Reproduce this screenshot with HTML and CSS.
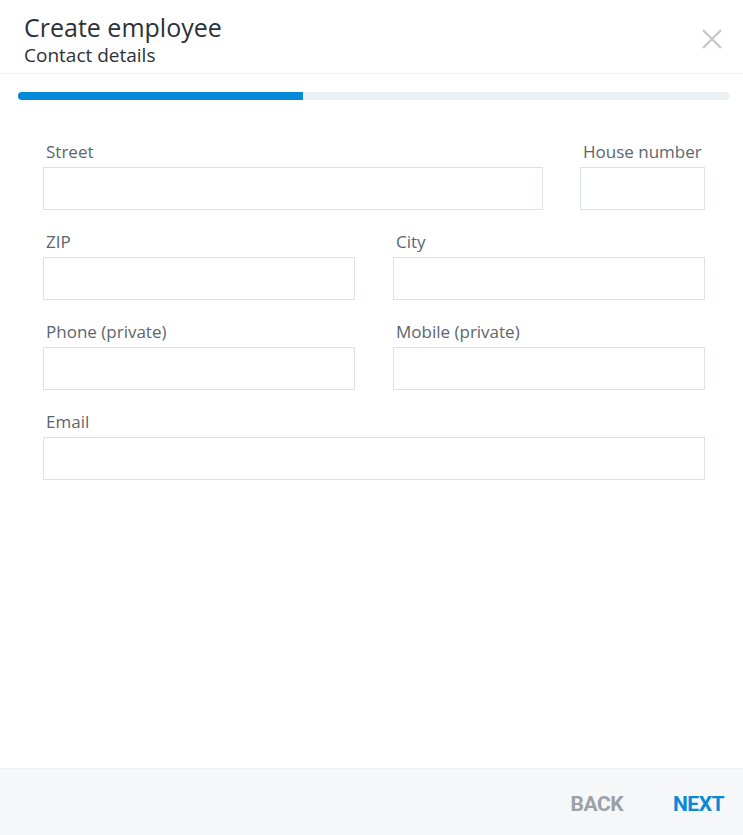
FILE: index.html
```html
<!DOCTYPE html>
<html lang="en">
<head>
  <meta charset="UTF-8">
  <meta name="viewport" content="width=device-width, initial-scale=1.0">
  <title>Create employee</title>
  <link rel="stylesheet" href="styles.css">
</head>
<body>
  <div class="dialog">
    <!-- Заголовок -->
    <div class="dialog-header">
      <div>
        <h1 class="dialog-title">Create employee</h1>
        <div class="dialog-subtitle">Contact details</div>
      </div>
      <button class="close-button" aria-label="Close">
        <svg width="22" height="20" viewBox="0 0 22 20">
          <path d="M2 1 L20 19 M20 1 L2 19" stroke="#c9c9c9" stroke-width="2.4" fill="none"/>
        </svg>
      </button>
    </div>

    <div class="progress">
      <div class="progress-fill" style="width: 40%;"></div>
    </div>

    <!-- Форма -->
    <form class="contact-form">
      <div class="row row-street">
        <div class="field">
          <label for="street">Street</label>
          <input type="text" id="street">
        </div>
        <div class="field">
          <label for="house">House number</label>
          <input type="text" id="house">
        </div>
      </div>
      <div class="row">
        <div class="field">
          <label for="zip">ZIP</label>
          <input type="text" id="zip">
        </div>
        <div class="field">
          <label for="city">City</label>
          <input type="text" id="city">
        </div>
      </div>
      <div class="row">
        <div class="field">
          <label for="phone">Phone (private)</label>
          <input type="text" id="phone">
        </div>
        <div class="field">
          <label for="mobile">Mobile (private)</label>
          <input type="text" id="mobile">
        </div>
      </div>
      <div class="row row-single">
        <div class="field">
          <label for="email">Email</label>
          <input type="text" id="email">
        </div>
      </div>
    </form>

    <div class="dialog-footer">
      <button class="footer-button back-button">BACK</button>
      <button class="footer-button next-button">NEXT</button>
    </div>
  </div>
</body>
</html>
```

FILE: styles.css
```css
body {
  font-family: "Open Sans", Lato, sans-serif;
  margin: 0;
  padding: 0;
  background-color: #fff;
}

.dialog {
  height: 835px;
  display: flex;
  flex-direction: column;
}

/* Заголовок */
.dialog-header {
  display: flex;
  justify-content: space-between;
  align-items: flex-start;
  padding: 12px 20px 0 24px;
  height: 61px;
  border-bottom: 1px solid #eef0f2;
}

.dialog-title {
  margin: 0;
  font-size: 25px;
  font-weight: 400;
  line-height: 31px;
  color: #2b3237;
}

.dialog-subtitle {
  font-size: 19px;
  line-height: 24px;
  color: #2b3237;
}

.close-button {
  background: none;
  border: none;
  padding: 0;
  margin-top: 17px;
  cursor: pointer;
}

.progress {
  margin: 18px 13px 0 18px;
  height: 8px;
  border-radius: 4px;
  background-color: #eceff1;
  overflow: hidden;
}

.progress-fill {
  height: 100%;
  background-color: #0389d8;
}

/* Форма */
.contact-form {
  flex: 1;
  margin: 0;
  padding: 42px 38px 0 43px;
  display: flex;
  flex-direction: column;
  gap: 22px;
}

.row {
  display: grid;
  grid-template-columns: 1fr 1fr;
  column-gap: 38px;
}

.row-street {
  grid-template-columns: 500px 125px;
  column-gap: 37px;
}

.row-single {
  grid-template-columns: 1fr;
}

.field label {
  display: block;
  padding-left: 3px;
  font-size: 17px;
  line-height: 20px;
  margin-bottom: 5px;
  color: #5b666e;
  white-space: nowrap;
}

.field input {
  display: block;
  box-sizing: border-box;
  width: 100%;
  height: 43px;
  border: 1px solid #dde2e5;
  border-radius: 0;
  font-size: 16px;
  padding: 0 10px;
}

/* Нижняя панель */
.dialog-footer {
  height: 67px;
  border-top: 1px solid #eef0f2;
  background-color: #f6f7f9;
  display: flex;
  justify-content: flex-end;
  align-items: center;
  gap: 50px;
  padding: 4px 19px 0 0;
  box-sizing: border-box;
}

.footer-button {
  background: none;
  border: none;
  padding: 0;
  font-family: Roboto, sans-serif;
  font-weight: bold;
  font-size: 21px;
  letter-spacing: -0.5px;
  cursor: pointer;
}

.back-button {
  color: #9ca1a6;
}

.next-button {
  color: #0a8ad6;
}
```
